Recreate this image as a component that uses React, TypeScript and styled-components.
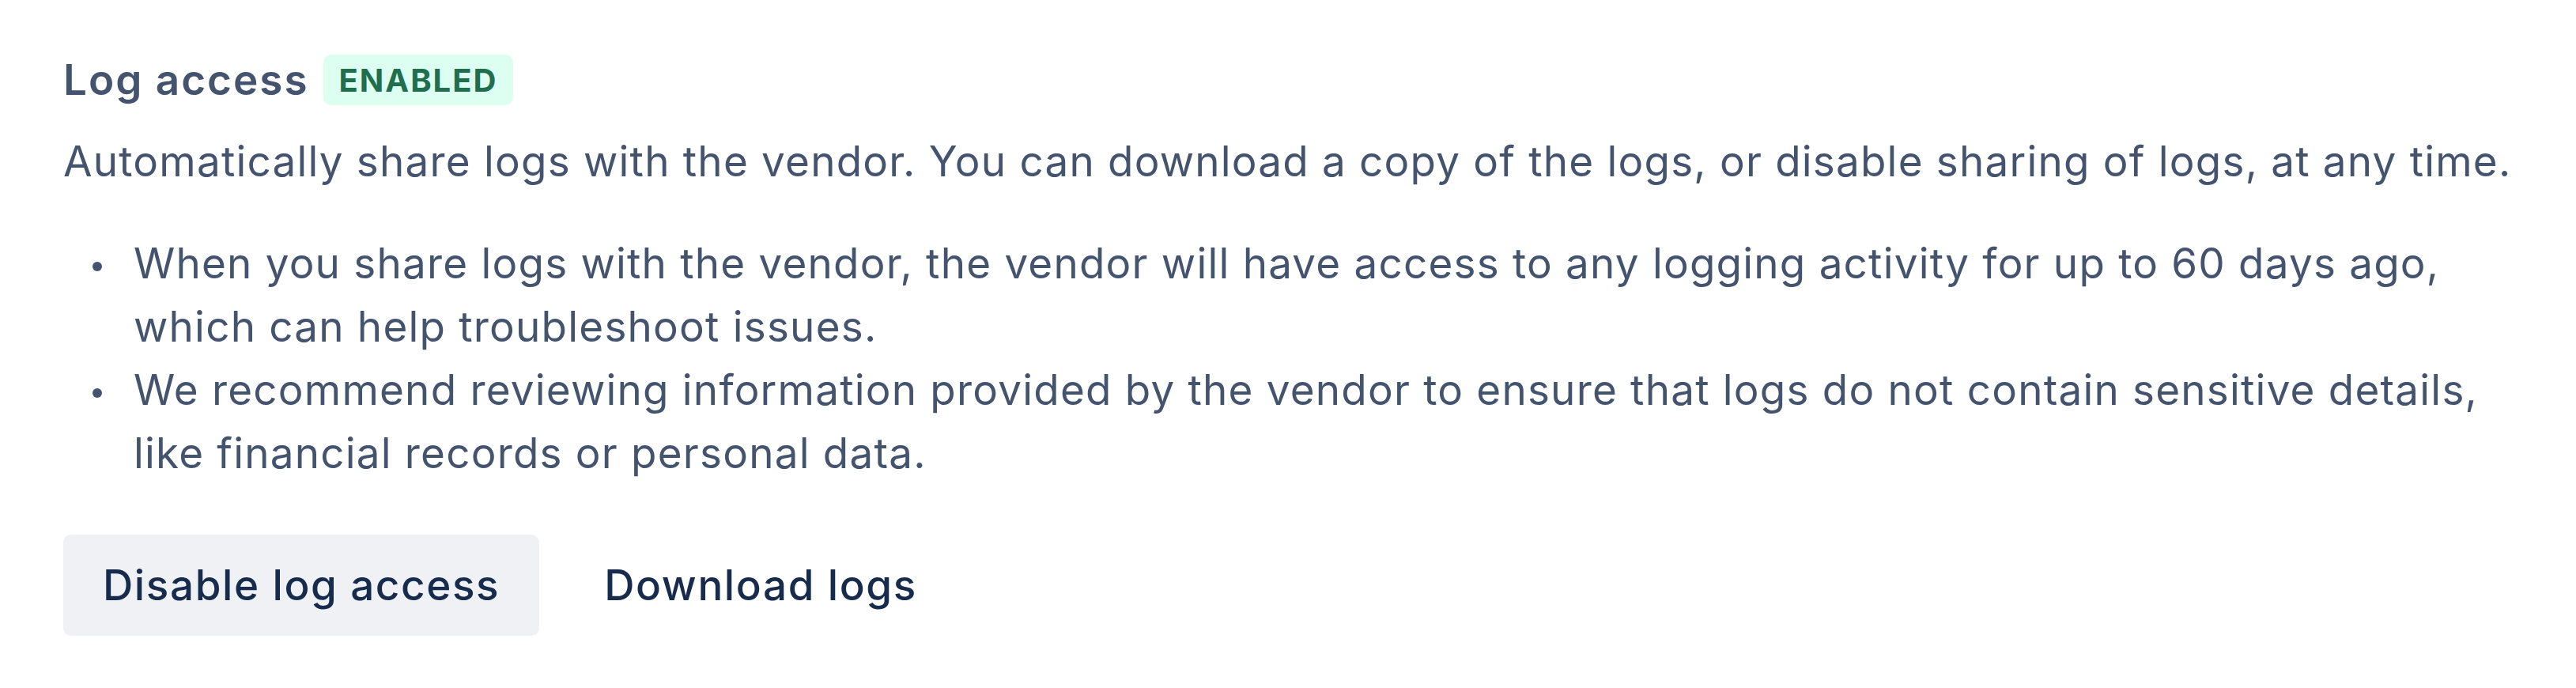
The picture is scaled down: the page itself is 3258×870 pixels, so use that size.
import styled, { createGlobalStyle } from 'styled-components'

const GlobalStyle = createGlobalStyle`
  html, body {
    margin: 0;
    padding: 0;
    background: #ffffff;
  }
  body {
    font-family: Inter, "Noto Sans", "Liberation Sans", sans-serif;
    -webkit-font-smoothing: antialiased;
  }
`

const Page = styled.div`
  padding: 61px 60px 0 80px;
  color: #44546f;
`

const Header = styled.div`
  display: flex;
  align-items: center;
  gap: 18px;
`

const Title = styled.h3`
  margin: 0;
  font-size: 53px;
  line-height: 80px;
  font-weight: 600;
  letter-spacing: 2px;
  color: #44546f;
`

const Lozenge = styled.span`
  display: inline-flex;
  align-items: center;
  height: 64px;
  padding: 0 20px;
  border-radius: 10px;
  background: #dcfff1;
  color: #216e4e;
  font-size: 40px;
  font-weight: 700;
  letter-spacing: 2px;
  text-transform: uppercase;
`

const Description = styled.p`
  margin: 23px 0 0;
  font-size: 53px;
  line-height: 80px;
  letter-spacing: 1.2px;
`

const List = styled.ul`
  margin: 49px 0 0;
  padding: 0;
  list-style: none;
`

const Item = styled.li`
  display: grid;
  grid-template-columns: 89px 1fr;
  font-size: 53px;
  line-height: 80px;
  letter-spacing: 1.2px;
`

const Bullet = styled.span`
  width: 12px;
  height: 12px;
  margin: 38px 0 0 37px;
  border-radius: 50%;
  background: #44546f;
`

const Actions = styled.div`
  display: flex;
  gap: 32px;
  margin-top: 63px;
`

const Button = styled.button<{ subtle?: boolean }>`
  height: 128px;
  padding: 0 50px;
  border: none;
  border-radius: 10px;
  background: ${({ subtle }) => (subtle ? 'transparent' : '#f0f1f4')};
  color: #172b4d;
  font-family: inherit;
  font-size: 53px;
  font-weight: 500;
  letter-spacing: 1.6px;
  cursor: pointer;
`

const bullets = [
  'When you share logs with the vendor, the vendor will have access to any logging activity for up to 60 days ago, which can help troubleshoot issues.',
  'We recommend reviewing information provided by the vendor to ensure that logs do not contain sensitive details, like financial records or personal data.',
]

export default function App() {
  return (
    <>
      <GlobalStyle />
      <Page>
        <Header>
          <Title>Log access</Title>
          <Lozenge>Enabled</Lozenge>
        </Header>
        <Description>
          Automatically share logs with the vendor. You can download a copy of the logs, or disable
          sharing of logs, at any time.
        </Description>
        <List>
          {bullets.map((text, index) => (
            <Item key={index}>
              <Bullet />
              <span>{text}</span>
            </Item>
          ))}
        </List>
        <Actions>
          <Button>Disable log access</Button>
          <Button subtle>Download logs</Button>
        </Actions>
      </Page>
    </>
  )
}
